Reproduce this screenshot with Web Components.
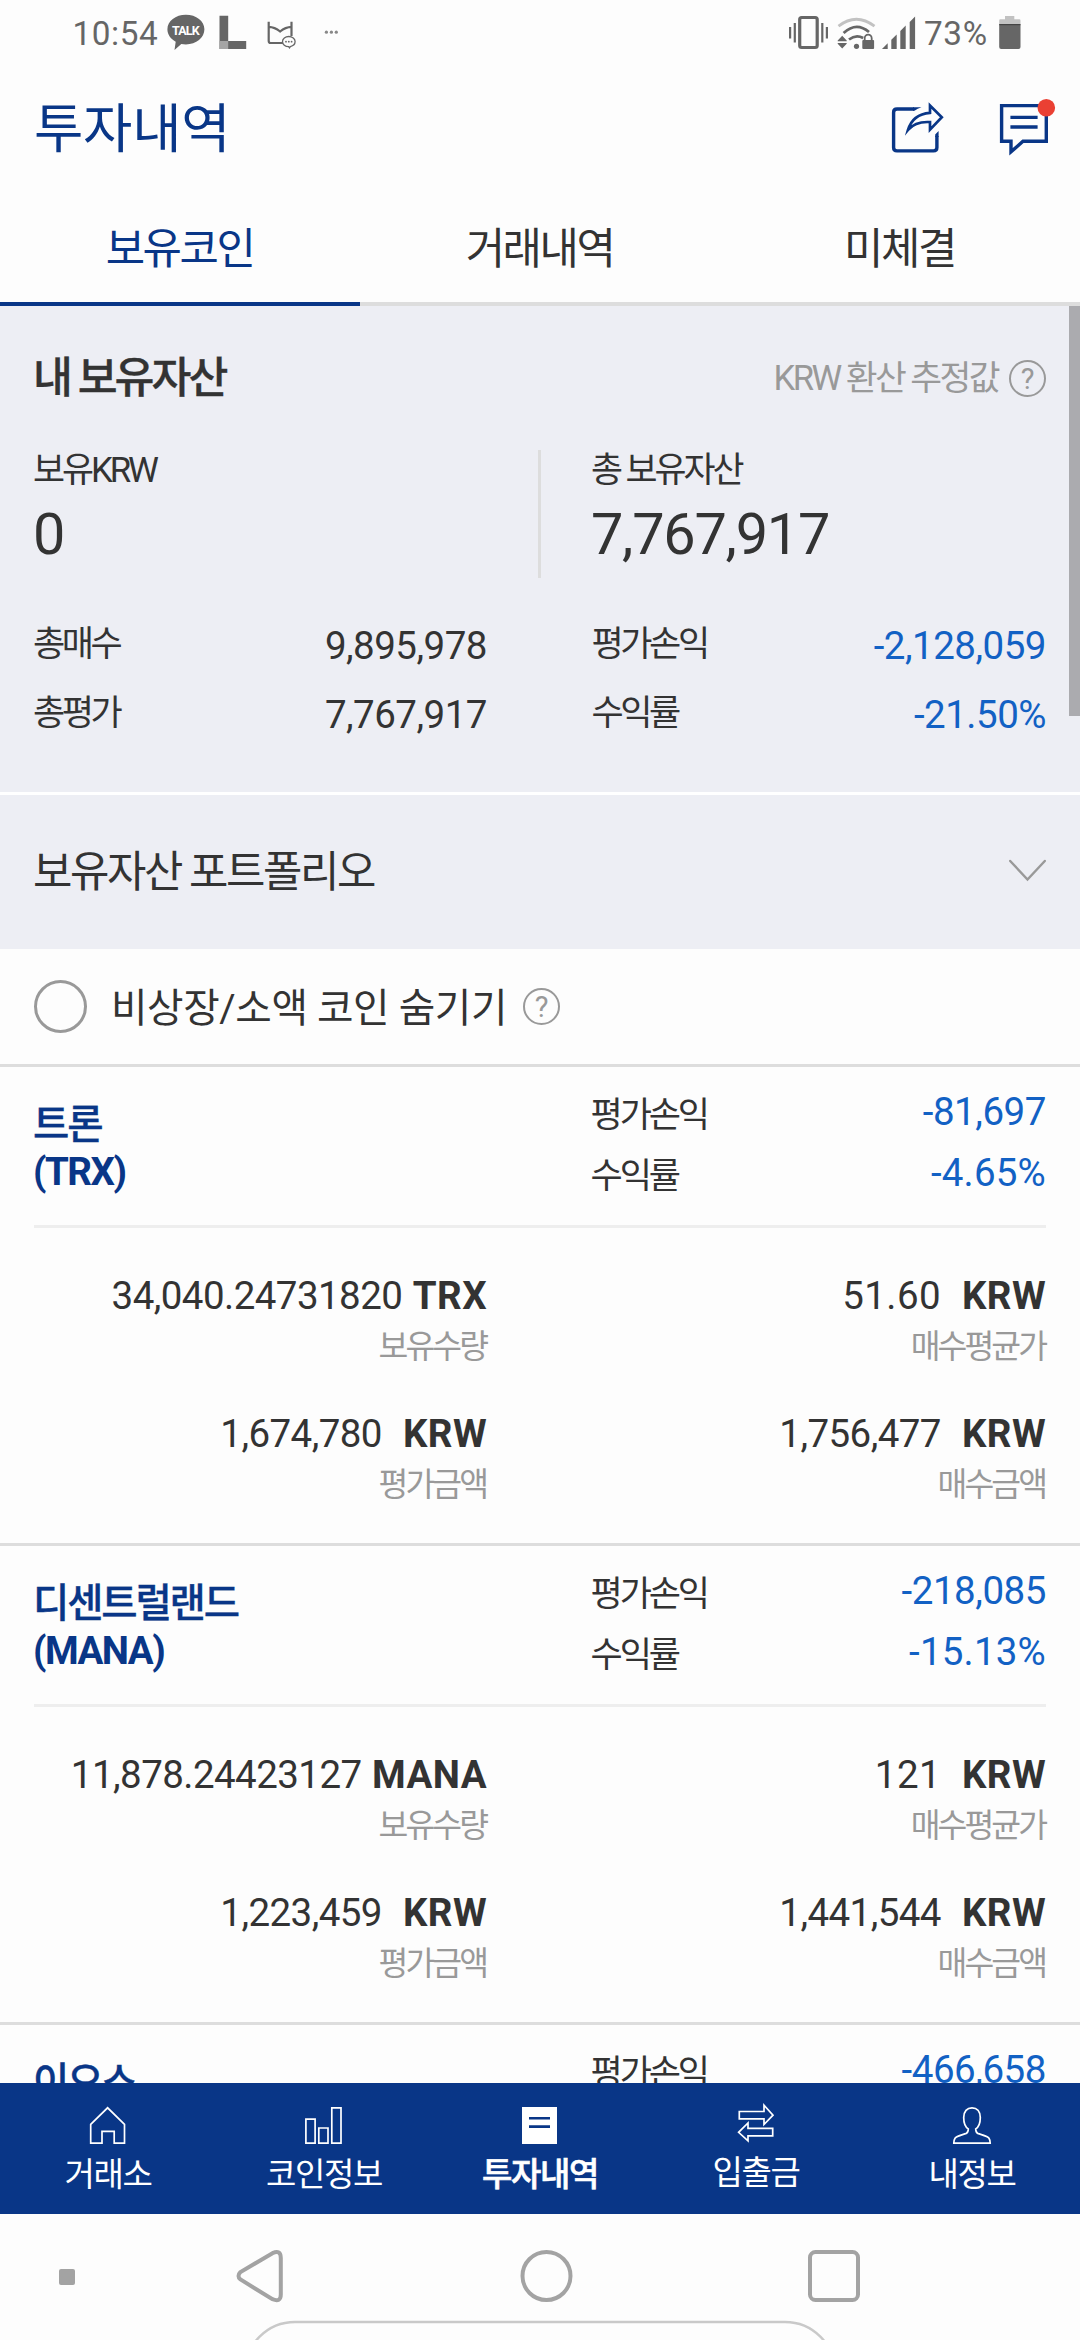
<!DOCTYPE html>
<html lang="ko">
<head>
<meta charset="utf-8">
<title>투자내역</title>
<style>
html,body{margin:0;padding:0}
body{width:1080px;height:2340px;overflow:hidden;background:#fdfdfd;color:#333;font-family:Roboto,"Noto Sans CJK KR",sans-serif}
</style>
</head>
<body>
<wallet-screen>
  <status-bar slot="status" time="10:54" battery="73%"></status-bar>
  <title-bar slot="title">투자내역</title-bar>
  <tab-strip slot="tabs">
    <tab-item active>보유코인</tab-item>
    <tab-item>거래내역</tab-item>
    <tab-item>미체결</tab-item>
  </tab-strip>
  <asset-summary></asset-summary>
  <portfolio-row>보유자산 포트폴리오</portfolio-row>
  <coin-filter>비상장/소액 코인 숨기기</coin-filter>
  <coin-card name="트론" code="TRX" profit="-81,697" rate="-4.65%" qty="34,040.24731820" avg="51.60" value="1,674,780" cost="1,756,477"></coin-card>
  <coin-card name="디센트럴랜드" code="MANA" profit="-218,085" rate="-15.13%" qty="11,878.24423127" avg="121" value="1,223,459" cost="1,441,544"></coin-card>
  <coin-card name="이오스" peek profit="-466,658"></coin-card>
  <bottom-nav slot="nav">
    <nav-item icon="home">거래소</nav-item>
    <nav-item icon="bars">코인정보</nav-item>
    <nav-item icon="list" active>투자내역</nav-item>
    <nav-item icon="swap" raised>입출금</nav-item>
    <nav-item icon="user">내정보</nav-item>
  </bottom-nav>
  <system-nav slot="system"></system-nav>
</wallet-screen>
<script>
const define = (name, css, html) => customElements.define(name, class extends HTMLElement {
  constructor() {
    super();
    const root = this.attachShadow({ mode: 'open' });
    const attr = k => this.getAttribute(k) || '';
    root.innerHTML = `<style>*{box-sizing:border-box}:host{display:block;box-sizing:border-box}svg{display:block}${css}</style>` + (typeof html === 'function' ? html(attr, this) : html);
  }
});

define('wallet-screen', `
  :host{width:1080px;height:2340px;display:flex;flex-direction:column;overflow:hidden}
  .scroll{position:relative;height:1777px;overflow:hidden;flex:none}
  .thumb{position:absolute;right:0;top:0;width:11px;height:410px;background:#ababaf}
`, `<slot name="status"></slot><slot name="title"></slot><slot name="tabs"></slot>
  <div class="scroll"><slot></slot><div class="thumb"></div></div>
  <slot name="nav"></slot><slot name="system"></slot>`);

define('status-bar', `
  :host{display:flex;height:67px;line-height:67px;font-size:33.3px;color:#666;flex:none;justify-content:space-between}
  .l{display:flex;padding-left:72.5px;letter-spacing:.55px}
  .r{display:flex;letter-spacing:.6px;padding-right:59px}
  .l span{width:89px}.r span{width:75px}
  svg text{font:700 12.5px Roboto,sans-serif;letter-spacing:-.84px}
`, a => `<div class="l"><span>${a('time')}</span>
  <svg width="180" height="67" viewBox="161.5 0 180 67">
    <path fill="#666" d="M185.400 14.700c10.300 0 18.500 6.200 18.500 14.600s-8.200 15.100-18.500 15.100c-1.600 0-3.100-.1-4.600-.4L174 50l1.200-8.300c-5-2.700-8.300-7-8.300-12.400 0-8.400 8.200-14.600 18.500-14.600z"/>
    <text x="171.500" y="35.300" fill="#fff">TALK</text>
    <path fill="#666" d="M219 15.700h8.700V41h18v8H219z"/><path fill="#a5a5a5" d="M219 41h8.700v8H219z"/>
    <path fill="none" stroke="#666" stroke-width="2.200" d="M268.200 21.800V41q0 2 2 2H283M291 21.800V36M268.200 26.800q6 .2 11.400 4.700 5.400-4.500 11.400-4.700"/>
    <path fill="#fdfdfd" stroke="#666" stroke-width="1.300" d="M288.300 36.500c3.500 0 6.300 2.300 6.300 5.100 0 2.400-2 4.400-4.800 5l-.8 1.300-.9-1.200c-3.400 0-6.100-2.300-6.100-5.100s2.800-5.100 6.300-5.100z"/>
    <g fill="#666"><circle cx="285.500" cy="41.700" r=".9"/><circle cx="288.300" cy="41.700" r=".9"/><circle cx="291.100" cy="41.700" r=".9"/></g>
    <g fill="#888"><circle cx="325.900" cy="32.200" r="1.600"/><circle cx="330.900" cy="32.200" r="1.600"/><circle cx="335.800" cy="32.200" r="1.600"/></g>
  </svg></div>
  <div class="r"><svg width="138" height="67" viewBox="786 0 138 67">
    <rect x="799.700" y="17.500" width="17.500" height="30" rx="2" fill="none" stroke="#666" stroke-width="3.200"/>
    <path fill="#666" d="M789 27h2.200v11.500H789zM793.700 23h2.200v19.500h-2.200zM821.200 23h2.200v19.500h-2.200zM825.800 27h2.200v11.500h-2.200z"/>
    <path fill="none" stroke="#c2c2c2" stroke-width="2.800" d="M838.500 26.200q17.800-13.800 36 0"/>
    <path fill="none" stroke="#666" stroke-width="2.800" d="M843.600 33q12.700-11.800 25.400-1M849 39.500q7-5.500 14.200-1.500"/>
    <circle cx="856.500" cy="46.300" r="2.600" fill="#666"/>
    <path fill="#666" d="M842.200 35.800l4.500 4.600v.8h-9v-.8zM837.700 43h9v.8l-4.500 4.600-4.500-4.600z"/>
    <rect x="862.300" y="40" width="11.800" height="9" rx="1" fill="#666"/>
    <path fill="none" stroke="#666" stroke-width="1.800" d="M864.700 41v-2.800a3.500 3.500 0 0 1 7 0V41"/>
    <path fill="#666" d="M882 49l5.700-5.700V49zM891.300 49v-9.200l5.400-5.400V49zM900.300 49V31l5.400-5.400V49zM909.700 49V22l5.400-5.400V49z"/>
  </svg><span>${a('battery')}</span>
  <svg width="22" height="67" viewBox="999 0 22 67">
    <path fill="#c2c2c2" d="M1005 16h9.300v3.300h5q1.200 0 1.200 1.200v4h-21.300v-4q0-1.200 1.200-1.200h4.600z"/>
    <path fill="#666" d="M999.200 24.500h21.300V47q0 2-2 2h-17.300q-2 0-2-2z"/><path fill="#444" d="M999.200 24h21.300v1.200h-21.300z"/>
  </svg></div>`);

define('title-bar', `
  :host{display:flex;height:126px;line-height:126px;padding-left:34px;font-size:53.6px;letter-spacing:-.2px;color:#093687;justify-content:space-between;flex:none}
`, `<span><slot></slot></span><svg width="200" height="126" viewBox="880 67 200 126" fill="none" stroke="#093687" stroke-width="3.400">
    <path d="M914 109H897q-3.400 0-3.400 3.400V147.500q0 3.400 3.400 3.400H933.500q3.400 0 3.400-3.400V136"/>
    <path fill="#093687" stroke="none" d="M913 107.300H921.500Q917.500 108.600 914.500 110.700H913zM938.600 131V137H935.200V134.500z"/>
    <path stroke-width="2.700" stroke-miterlimit="12" d="M930 105.500v7.300c-10.500.8-18.800 6.300-22 17.200 5.300-6.300 12.500-8.500 22-7.900v7.500l11.800-12.300z"/>
    <path d="M1001.600 105.600H1046.300V141.300H1023l-12 10.500V141.300H1001.600z"/>
    <path d="M1010.400 117.400h27.200M1010.400 127h27.200"/>
    <circle cx="1046.300" cy="107.800" r="8.800" fill="#ea4033" stroke="none"/>
  </svg>`);

define('tab-strip', `:host{display:flex;height:113px;flex:none}`, `<slot></slot>`);
define('tab-item', `
  :host{flex:1;height:113px;line-height:113px;text-align:center;padding-right:1px;font-size:42.8px;letter-spacing:-2.450px;color:#333;border-bottom:4px solid #ddd}
  :host([active]){color:#093687;border-color:#093687}
`, `<slot></slot>`);

define('help-mark', `:host{width:37px;height:37px;border:2px solid #999;border-radius:50%;color:#999;font-size:29px;line-height:34px;text-align:center;letter-spacing:0;flex:none}`, `?`);

define('asset-summary', `
  :host{height:489px;background:#edeef4;border-bottom:3px solid #fff;padding:0 34px 0 33px}
  .head{display:flex;height:144px;line-height:145px;justify-content:space-between;align-items:center}
  .head b{font-size:43.4px;font-weight:500;letter-spacing:-3px;-webkit-text-stroke:.3px}
  .head div{display:flex;align-items:center;font-size:34.6px;letter-spacing:-2.55px;color:#999;gap:11px}
  .big{display:flex;height:128px;font-size:34.8px;letter-spacing:-3.050px;line-height:40px}
  .big>div{width:507px}
  .big>div+div{border-left:3px solid #ddd;padding-left:50px;margin-left:-2px}
  .big p{margin:0;font-size:57.6px;letter-spacing:-1.25px;line-height:90px}
  .grid{display:grid;grid-template-columns:454px 454.500px;column-gap:104.500px;padding-top:32px;line-height:69px}
  .grid div{display:flex;justify-content:space-between;height:69px;font-size:35px;letter-spacing:-3.400px}
  .grid span{font-size:38.5px;letter-spacing:-.5px;padding-top:1px}
  .neg{color:#1261c4}
`, `<div class="head"><b>내 보유자산</b><div>KRW 환산 추정값<help-mark></help-mark></div></div>
  <div class="big"><div>보유KRW<p>0</p></div><div>총 보유자산<p>7,767,917</p></div></div>
  <div class="grid"><div>총매수<span>9,895,978</span></div><div>평가손익<span class="neg">-2,128,059</span></div>
  <div>총평가<span>7,767,917</span></div><div>수익률<span class="neg">-21.50%</span></div></div>`);

define('portfolio-row', `
  :host{display:flex;height:154px;background:#edeef4;padding:0 34px 0 33px;align-items:center;justify-content:space-between;font-size:42.8px;line-height:154px;letter-spacing:-2.4px}
  svg{margin-top:-2px}
`, `<span><slot></slot></span><svg width="37" height="24" viewBox="0 0 37 24" fill="none" stroke="#999" stroke-width="2.400" stroke-linecap="round"><path d="M1.200 2L18.500 20.500 35.800 2"/></svg>`);

define('coin-filter', `
  :host{display:flex;height:118px;border-bottom:3px solid #ddd;padding-left:34px;align-items:center;font-size:39.7px;letter-spacing:-.4px}
  i{width:53px;height:53px;border:3px solid #999;border-radius:50%}
  span{margin-left:24px;line-height:50px;padding-top:5px;width:412px;white-space:nowrap}
`, `<i></i><span><slot></slot></span><help-mark></help-mark>`);

define('coin-card', `
  :host{height:479px;border-bottom:3px solid #ddd;padding:0 34px}
  .head{display:flex;height:161px;border-bottom:3px solid #eee;justify-content:space-between}
  .name{color:#093687;font-size:39.5px;font-weight:500;letter-spacing:-2.200px;line-height:47px;padding-top:34px;margin-left:-1px;-webkit-text-stroke:.3px}
  .name b{display:block;font-size:38.500px;font-weight:700;letter-spacing:-1.5px;-webkit-text-stroke:0}
  .pl{width:455.400px;padding-top:18px}
  .pl div{display:flex;justify-content:space-between;height:61px;line-height:61px;font-size:35px;letter-spacing:-3.150px}
  .pl span{font-size:38.5px;letter-spacing:-.45px;color:#1261c4;margin-top:-4.500px}
  .body{display:grid;grid-template-columns:453px 455px;column-gap:104px;row-gap:36px;padding-top:42px;text-align:right}
  .v{display:flex;justify-content:flex-end;font-size:38.5px;letter-spacing:-.55px;line-height:52px;height:52px;gap:21px}
  .v.q{gap:10.500px}
  .v b{font-weight:700;letter-spacing:.4px}
  small{display:block;font-size:32.4px;letter-spacing:-2.950px;line-height:50px;height:50px;color:#999;padding-right:1px}
`, (a, el) => {
  const cell = (v, u, l, q) => `<div><div class="v ${q}"><span${v.length < 6 ? ' style="letter-spacing:.4px"' : ''}>${v}</span><b>${u}</b></div><small>${l}</small></div>`;
  const peek = el.hasAttribute('peek');
  return `<div class="head"><div class="name">${a('name')}${peek ? '' : `<b>(${a('code')})</b>`}</div>
    <div class="pl"><div>평가손익<span>${a('profit')}</span></div>${peek ? '' : `<div>수익률<span style="letter-spacing:.2px">${a('rate')}</span></div>`}</div></div>` +
    (peek ? '' : `<div class="body">${cell(a('qty'), a('code'), '보유수량', 'q')}${cell(a('avg'), 'KRW', '매수평균가', '')}${cell(a('value'), 'KRW', '평가금액', '')}${cell(a('cost'), 'KRW', '매수금액', '')}</div>`);
});

define('bottom-nav', `:host{display:flex;height:131px;background:#093687;flex:none}`, `<slot></slot>`);

const icons = {
  home: `<path d="M6.700 40.200V21.300L23.600 4.800 40.500 21.300V40.200H30.200V28.400H18V40.200z"/>`,
  bars: `<path d="M5.900 16.200h9.200v24H5.900zM18.800 25h9.200v15.200H18.800zM31.800 4.900h9.200v35.300H31.800z"/>`,
  list: `<path fill="#fff" stroke="none" d="M6 4h35v37H6z"/><path stroke="#093687" stroke-width="2.600" d="M13 15.300h21M13 23.600h21"/>`,
  swap: `<path d="M7.300 10.500H32V4.300L41 14.200 32 23.500V17.800H7.300zM40.700 27.400H16V22L6.600 31.300 16 39.800V34.800H40.700z"/>`,
  user: `<path d="M24 4.800c-5 0-8.300 3.600-8.300 9.800 0 5.400 2 9.800 4.600 11.400-.2 3-.8 3.900-2 4.400C13 32.200 8.500 33 7 35.200c-.9 1.300-1.200 3-1.200 5H42.200c0-2-.3-3.700-1.200-5-1.500-2.200-6-3-11.300-4.800-1.200-.5-1.800-1.400-2-4.400 2.600-1.600 4.600-6 4.600-11.400 0-6.200-3.300-9.800-8.300-9.800z"/>`
};
define('nav-item', `
  :host{flex:1;display:flex;flex-direction:column;align-items:center;padding-top:20px;color:#fff;font-size:33px;line-height:40px;letter-spacing:-1.3px}
  :host([active]){font-weight:500;-webkit-text-stroke:.6px}
  :host([raised]){padding-top:18px}
  svg{margin-bottom:7px}
`, a => `<svg width="48" height="45" viewBox="0 0 48 45" fill="none" stroke="#fff" stroke-width="1.700">${icons[a('icon')]}</svg><span><slot></slot></span>`);

define('system-nav', `:host{height:126px;flex:none}`, `<svg width="1080" height="126" viewBox="0 2214 1080 126" fill="none" stroke="#a3a3a3" stroke-width="4">
  <rect x="59" y="2269" width="16" height="16" rx="2" fill="#a3a3a3" stroke="none"/>
  <path d="M272.500 2253.200L240.500 2272Q236.500 2276 240.500 2279.500L272.500 2299.200Q280.800 2302.500 280.800 2294.500V2258Q280.800 2249.500 272.500 2253.200z"/>
  <circle cx="546.500" cy="2276" r="24"/>
  <rect x="810" y="2252" width="48" height="48" rx="5.500"/>
  <rect x="245" y="2322" width="590" height="100" rx="50" stroke="#c9c9c9" stroke-width="2.400"/>
</svg>`);
</script>
</body>
</html>
